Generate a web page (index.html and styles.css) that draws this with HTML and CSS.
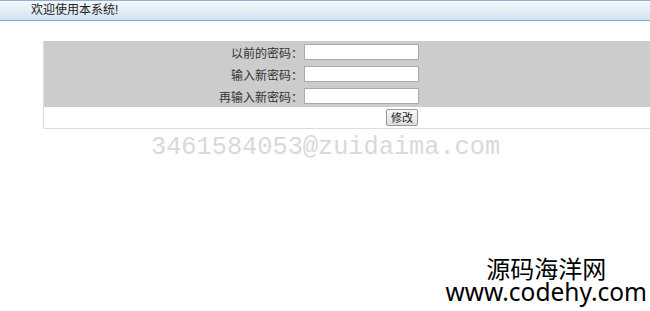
FILE: index.html
```html
<!DOCTYPE html>
<html>
<head>
  <title>修改密码</title>
  <meta charset="UTF-8">
  <link rel="stylesheet" href="styles.css">
</head>
<body>
  <div class="header">欢迎使用本系统!</div>

  <form class="panel">
    <div class="fields">
      <div class="row">
        <label>以前的密码：</label>
        <input type="password">
      </div>
      <div class="row">
        <label>输入新密码：</label>
        <input type="password">
      </div>
      <div class="row">
        <label>再输入新密码：</label>
        <input type="password">
      </div>
    </div>
    <div class="actions">
      <button type="button">修改</button>
    </div>
  </form>

  <div class="mark">3461584053@zuidaima.com</div>

  <div class="brand">
    <div class="brand-cn">源码海洋网</div>
    <div class="brand-url">www.codehy.com</div>
  </div>
</body>
</html>
```

FILE: styles.css
```css
html, body {
  margin: 0;
  padding: 0;
  overflow: hidden;
}
body {
  font-family: "Liberation Sans", "Noto Sans CJK SC", sans-serif;
  font-size: 12px;
  color: #333;
  background-color: #fff;
  height: 311px;
  position: relative;
}
.header {
  height: 19px;
  line-height: 19px;
  padding-left: 31px;
  border-top: 1px solid #8fb0cf;
  border-bottom: 1px solid #7da7cc;
  background: linear-gradient(to bottom, #f4f8fc, #d2e2f1);
  color: #222;
}
.panel {
  margin: 20px 0 0 43px;
  width: 640px;
  border: 1px solid #ddd;
  border-top: none;
  border-right: none;
}
.fields {
  background-color: #cccccc;
}
.row {
  display: flex;
  align-items: center;
  height: 22px;
}
.row label {
  width: 259px;
  text-align: right;
  color: #333;
}
.row input {
  width: 111px;
  height: 12px;
  margin-left: 1px;
  padding: 1px;
  border: 1px solid #aaa;
  background-color: #fff;
}
.actions {
  height: 21px;
  display: flex;
  align-items: center;
  padding-left: 342px;
}
.actions button {
  font-family: "Noto Sans CJK SC", sans-serif;
  font-size: 11px;
  height: 17px;
  line-height: 13px;
  width: 32px;
  padding: 0;
  border: 1px solid #999;
  border-radius: 2px;
  background: linear-gradient(to bottom, #fafafa, #dedede);
  color: #222;
}
.mark {
  margin: 4px 0 0 151px;
  font-family: "Liberation Mono", monospace;
  font-size: 25.3px;
  line-height: 30px;
  color: #d9d9d9;
}
.brand {
  position: absolute;
  right: 3px;
  bottom: 7px;
  text-align: center;
  color: #000;
}
.brand-cn {
  font-family: "Noto Sans CJK SC", sans-serif;
  font-size: 24px;
  line-height: 24px;
}
.brand-url {
  font-family: "Noto Sans", "Open Sans", sans-serif;
  font-size: 24.5px;
  line-height: 24px;
}
```
